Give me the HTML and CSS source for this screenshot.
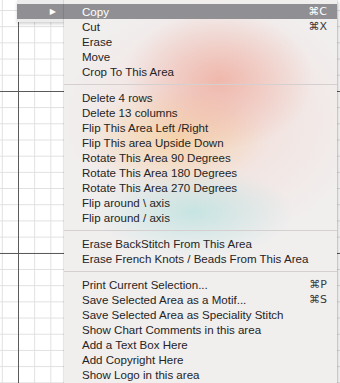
FILE: index.html
```html
<!DOCTYPE html>
<html lang="en">
<head>
    <meta charset="UTF-8">
    <title>Chart Context Menu</title>
    <link rel="stylesheet" href="styles.css">
</head>
<body>
    <div class="canvas">
        <div class="parent-menu">
            <div class="parent-item active"><span class="arrow">▶</span></div>
        </div>

        <div class="menu">
            <div class="item active"><span>Copy</span><span class="key">⌘C</span></div>
            <div class="item"><span>Cut</span><span class="key">⌘X</span></div>
            <div class="item"><span>Erase</span></div>
            <div class="item"><span>Move</span></div>
            <div class="item"><span>Crop To This Area</span></div>
            <div class="sep"></div>
            <div class="item"><span>Delete 4 rows</span></div>
            <div class="item"><span>Delete 13 columns</span></div>
            <div class="item"><span>Flip This Area Left /Right</span></div>
            <div class="item"><span>Flip This area Upside Down</span></div>
            <div class="item"><span>Rotate This Area 90 Degrees</span></div>
            <div class="item"><span>Rotate This Area 180 Degrees</span></div>
            <div class="item"><span>Rotate This Area 270 Degrees</span></div>
            <div class="item"><span>Flip around \ axis</span></div>
            <div class="item"><span>Flip around / axis</span></div>
            <div class="sep"></div>
            <div class="item"><span>Erase BackStitch From This Area</span></div>
            <div class="item"><span>Erase French Knots / Beads From This Area</span></div>
            <div class="sep"></div>
            <div class="item"><span>Print Current Selection...</span><span class="key">⌘P</span></div>
            <div class="item"><span>Save Selected Area as a Motif...</span><span class="key">⌘S</span></div>
            <div class="item"><span>Save Selected Area as Speciality Stitch</span></div>
            <div class="item"><span>Show Chart Comments in this area</span></div>
            <div class="item"><span>Add a Text Box Here</span></div>
            <div class="item"><span>Add Copyright Here</span></div>
            <div class="item"><span>Show Logo in this area</span></div>
        </div>
    </div>
</body>
</html>
```

FILE: styles.css
```css
:root {
    --grid-thin: #e0e0e0;
    --grid-thick: #5a5a5a;
    --menu-bg: #f1eeee;
    --highlight: #8f8f94;
    --text: #242424;
    --key: #3a3a3a;
    --sep: #d6cfcf;
    --font: "Liberation Sans", Arial, sans-serif;
}

* {
    box-sizing: border-box;
    margin: 0;
    padding: 0;
}

body {
    width: 340px;
    height: 383px;
    overflow: hidden;
    font-family: var(--font);
    background: #ffffff;
}

.canvas {
    position: relative;
    width: 340px;
    height: 383px;
    background-color: #ffffff;
    background-image:
        linear-gradient(to right, var(--grid-thick) 1px, transparent 1px),
        linear-gradient(to bottom, var(--grid-thick) 1px, transparent 1px),
        linear-gradient(to right, var(--grid-thin) 1px, transparent 1px),
        linear-gradient(to bottom, var(--grid-thin) 1px, transparent 1px);
    background-size: 162px 162px, 162px 162px, 16.2px 16.2px, 16.2px 16.2px;
    background-position: 18px 0, 0 91px, 1.8px 0, 0 10px;
}

/* parent menu, only its highlighted row peeks out */
.parent-menu {
    position: absolute;
    left: 17px;
    top: 0;
    width: 48px;
    height: 22px;
    padding-top: 4px;
    background: #ececec;
    box-shadow: 0 2px 3px rgba(0, 0, 0, 0.18);
}

.parent-item {
    height: 15px;
    display: flex;
    align-items: center;
    justify-content: flex-end;
    padding-right: 9px;
}

.parent-item.active {
    background: var(--highlight);
}

.arrow {
    color: #ffffff;
    font-size: 8px;
    line-height: 1;
    font-family: "DejaVu Sans", sans-serif;
}

/* the context menu itself, with a blurred backdrop */
.menu {
    position: absolute;
    left: 64px;
    top: 0;
    width: 273px;
    height: 400px;
    padding-top: 4px;
    background-color: var(--menu-bg);
    background-image:
        radial-gradient(ellipse 95px 70px at 155px 80px, rgba(238, 165, 150, 0.7), rgba(238, 165, 150, 0) 100%),
        radial-gradient(ellipse 95px 50px at 110px 138px, rgba(246, 206, 150, 0.7), rgba(246, 206, 150, 0) 100%),
        radial-gradient(ellipse 100px 45px at 130px 212px, rgba(170, 224, 222, 0.6), rgba(170, 224, 222, 0) 100%),
        radial-gradient(ellipse 150px 120px at 150px 120px, rgba(244, 208, 198, 0.55), rgba(244, 208, 198, 0) 100%);
    box-shadow: 0 0 0 1px rgba(0, 0, 0, 0.08), 2px 2px 4px rgba(0, 0, 0, 0.18);
    color: var(--text);
    font-size: 11.55px;
}

.item {
    height: 15px;
    display: flex;
    align-items: center;
    justify-content: space-between;
    padding: 0 10px 0 18px;
    white-space: nowrap;
}

.item.active {
    background: var(--highlight);
    color: #ffffff;
}

.key {
    color: var(--key);
    font-family: "DejaVu Sans", var(--font);
    font-size: 11px;
}

.item.active .key {
    color: #ffffff;
}

.sep {
    height: 1px;
    margin: 5px 0;
    background: var(--sep);
}
```
